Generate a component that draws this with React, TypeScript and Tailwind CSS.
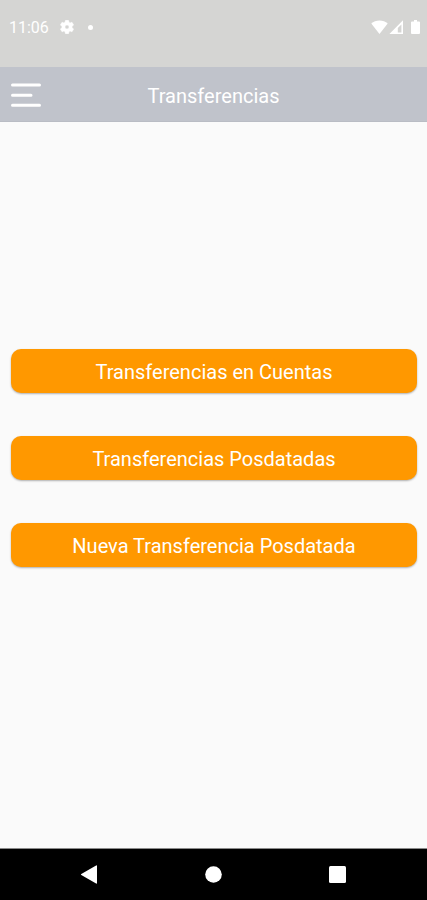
import { type ReactNode } from "react";

const ACTIONS = [
  "Transferencias en Cuentas",
  "Transferencias Posdatadas",
  "Nueva Transferencia Posdatada",
];

export default function App() {
  return (
    <div className="flex min-h-screen flex-col bg-[#fafafa] font-['Roboto',sans-serif] text-white">
      <StatusBar />
      <Header title="Transferencias" />
      <main className="flex flex-1 flex-col justify-center gap-[43px] pr-[10px] pb-[55px] pl-[11px]">
        {ACTIONS.map((label) => (
          <ActionButton key={label} label={label} />
        ))}
      </main>
      <NavigationBar />
    </div>
  );
}

// ─── Status bar ─────────────────────────────────────────────────────────────

function StatusBar() {
  return (
    <div className="flex h-[67px] items-start justify-between bg-[#d5d5d3] pt-[17px] pr-[7px] pl-[9px]">
      <div className="flex h-5 items-center">
        <span className="pt-[2px] text-base leading-5">11:06</span>
        <svg viewBox="2 2 20 20" className="ml-[11px] size-[14px]" fill="currentColor" stroke="currentColor" strokeWidth="0.8" aria-hidden="true">
          <path d="M19.14 12.94c.04-.3.06-.61.06-.94s-.02-.64-.07-.94l2.03-1.58a.49.49 0 0 0 .12-.61l-1.92-3.32a.49.49 0 0 0-.59-.22l-2.39.96a7 7 0 0 0-1.62-.94l-.36-2.54a.48.48 0 0 0-.48-.41h-3.84a.47.47 0 0 0-.47.41l-.36 2.54c-.59.24-1.13.57-1.62.94l-2.39-.96a.48.48 0 0 0-.59.22L2.74 8.87a.47.47 0 0 0 .12.61l2.03 1.58c-.05.3-.09.63-.09.94s.02.64.07.94l-2.03 1.58a.49.49 0 0 0-.12.61l1.92 3.32c.12.22.37.29.59.22l2.39-.96c.5.38 1.03.7 1.62.94l.36 2.54c.05.24.24.41.48.41h3.84c.24 0 .44-.17.47-.41l.36-2.54a7 7 0 0 0 1.62-.94l2.39.96c.22.08.47 0 .59-.22l1.92-3.32a.47.47 0 0 0-.12-.61zM12 15a3 3 0 1 1 0-6 3 3 0 0 1 0 6z" />
        </svg>
        <span className="ml-[14px] size-[5px] rounded-full bg-white" />
      </div>
      <div className="flex h-5 items-center">
        <svg viewBox="0 0 17 14" className="h-[14px] w-[17px]" fill="currentColor" aria-hidden="true">
          <path d="M8.5 14 .3 3.6C2.5 1.5 5.300.4 8.500.4s6 1.100 8.200 3.200z" />
        </svg>
        <svg viewBox="0 0 15 14" className="ml-px h-[14px] w-[15px]" fill="currentColor" fillRule="evenodd" aria-hidden="true">
          <path d="M14 .3V14H.4zM12.400 4.400 8.800 8v4.500h3.600z" />
        </svg>
        <svg viewBox="0 0 9 14" className="ml-[7px] h-[14px] w-[9px]" fill="currentColor" aria-hidden="true">
          <path d="M3 0h3v1.400h2a1 1 0 0 1 1 1V13a1 1 0 0 1-1 1H1a1 1 0 0 1-1-1V2.400a1 1 0 0 1 1-1h2z" />
        </svg>
      </div>
    </div>
  );
}

// ─── Header ─────────────────────────────────────────────────────────────────

function Header({ title }: { title: string }) {
  return (
    <header className="grid h-[55px] grid-cols-[1fr_auto_1fr] items-center border-b border-[#b9bcc4] bg-[#c0c3cb] px-[11px] pt-[2px]">
      <button type="button" aria-label="Abrir menú" className="justify-self-start">
        <svg viewBox="0 0 30 24" className="h-6 w-[30px]" stroke="currentColor" strokeWidth="3" strokeLinecap="round" aria-hidden="true">
          <path d="M1.500 2h27M1.500 12.200h18.500M1.500 22.200h27" />
        </svg>
      </button>
      <h1 className="pt-[2px] text-xl leading-6">{title}</h1>
    </header>
  );
}

// ─── Actions ────────────────────────────────────────────────────────────────

function ActionButton({ label }: { label: string }) {
  return (
    <button
      type="button"
      className="h-11 w-full rounded-[10px] bg-[#ff9800] pt-[2px] text-xl leading-6 shadow-[0_1px_2px_rgba(0,0,0,0.3)]"
    >
      {label}
    </button>
  );
}

// ─── Navigation bar ─────────────────────────────────────────────────────────

function NavigationBar() {
  return (
    <nav className="grid h-[52px] grid-cols-3 border-t border-[#8a8a8a] bg-black px-7">
      <NavButton label="Atrás">
        <path d="M17 1v17a.6.6 0 0 1-.9.5L1.300 10a.6.6 0 0 1 0-1L16.100.500A.6.6 0 0 1 17 1z" />
      </NavButton>
      <NavButton label="Inicio">
        <circle cx="9.500" cy="9.500" r="8.300" />
      </NavButton>
      <NavButton label="Recientes">
        <rect x="1" y="1" width="17" height="17" rx="1.500" />
      </NavButton>
    </nav>
  );
}

function NavButton({ label, children }: { label: string; children: ReactNode }) {
  return (
    <button type="button" aria-label={label} className="flex items-center justify-center">
      <svg viewBox="0 0 19 19" className="size-[19px]" fill="currentColor" aria-hidden="true">
        {children}
      </svg>
    </button>
  );
}
